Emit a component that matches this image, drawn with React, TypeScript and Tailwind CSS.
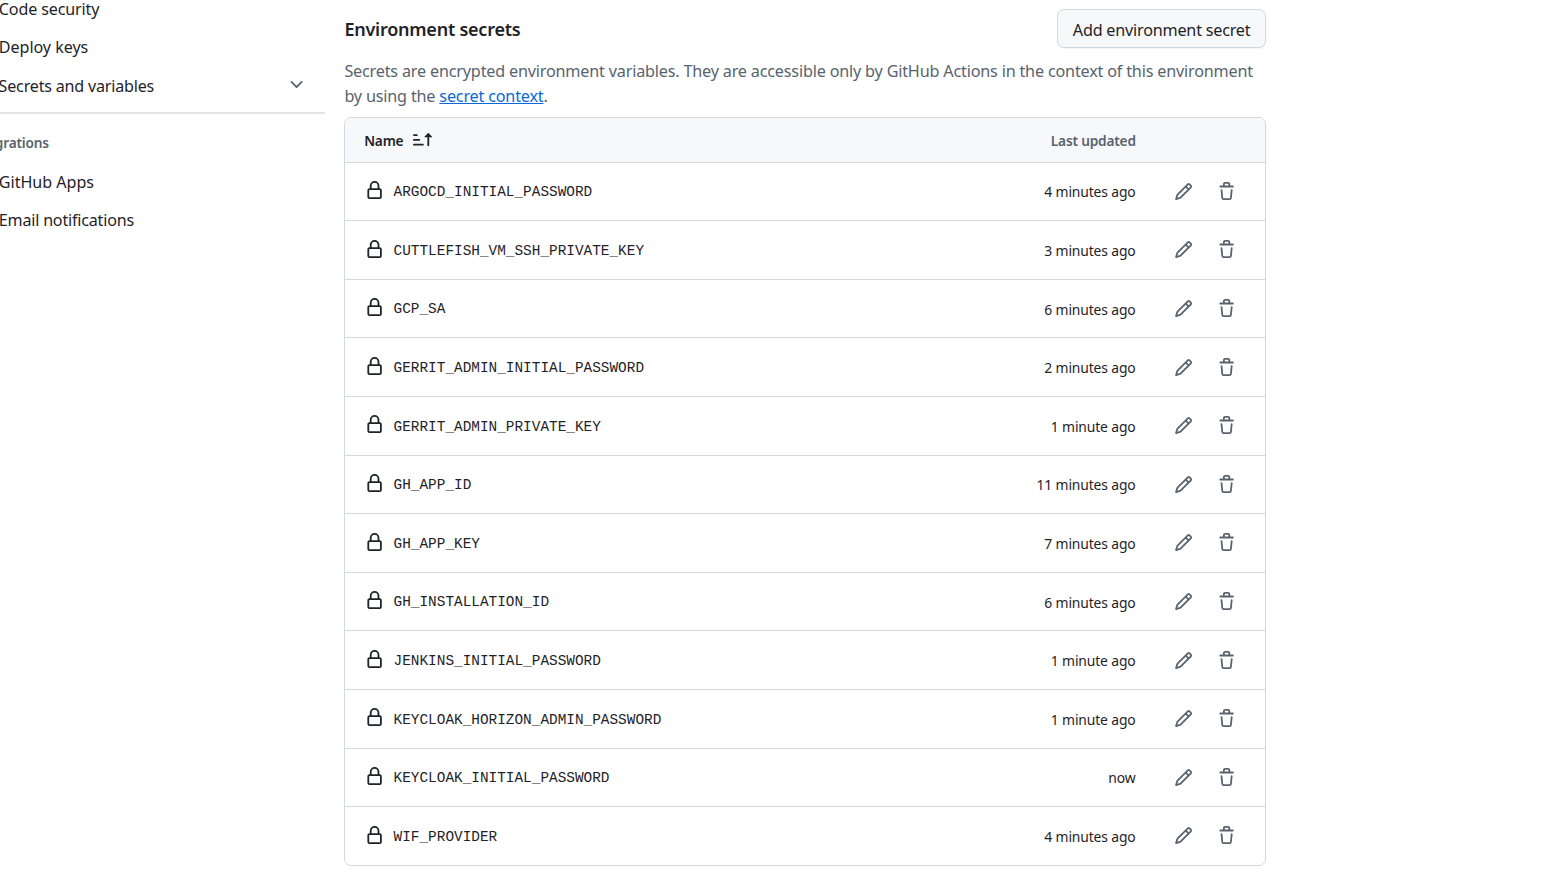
import React from "react";

const LOCK =
  "M4 4a4 4 0 0 1 8 0v2h.25c.966 0 1.75.784 1.75 1.75v5.5A1.75 1.75 0 0 1 12.25 15h-8.5A1.75 1.75 0 0 1 2 13.25v-5.5C2 6.784 2.784 6 3.75 6H4Zm8.25 3.5h-8.5a.25.25 0 0 0-.25.25v5.5c0 .138.112.25.25.25h8.5a.25.25 0 0 0 .25-.25v-5.5a.25.25 0 0 0-.25-.25ZM10.5 6V4a2.5 2.5 0 1 0-5 0v2Z";
const PENCIL =
  "M11.013 1.427a1.75 1.75 0 0 1 2.474 0l1.086 1.086a1.75 1.75 0 0 1 0 2.474l-8.61 8.61c-.21.21-.47.364-.756.445l-3.251.93a.75.75 0 0 1-.927-.928l.929-3.25c.081-.286.235-.547.445-.758l8.61-8.61Zm.176 4.823L9.75 4.81l-6.286 6.287a.253.253 0 0 0-.064.108l-.558 1.953 1.953-.558a.253.253 0 0 0 .108-.064Zm1.238-3.763a.25.25 0 0 0-.354 0L10.811 3.75l1.439 1.44 1.263-1.263a.25.25 0 0 0 0-.354Z";
const TRASH =
  "M11 1.75V3h2.25a.75.75 0 0 1 0 1.5H2.75a.75.75 0 0 1 0-1.5H5V1.75C5 .784 5.784 0 6.75 0h2.5C10.216 0 11 .784 11 1.75ZM4.496 6.675l.66 6.6a.25.25 0 0 0 .249.225h5.19a.25.25 0 0 0 .249-.225l.66-6.6a.75.75 0 0 1 1.492.149l-.66 6.6A1.748 1.748 0 0 1 10.595 15h-5.19a1.75 1.75 0 0 1-1.741-1.575l-.66-6.6a.75.75 0 1 1 1.492-.15ZM6.5 1.75V3h3V1.75a.25.25 0 0 0-.25-.25h-2.5a.25.25 0 0 0-.25.25Z";
const CHEVRON =
  "M12.78 5.22a.749.749 0 0 1 0 1.06l-4.25 4.25a.749.749 0 0 1-1.06 0L3.22 6.28a.749.749 0 1 1 1.06-1.06L8 8.939l3.72-3.719a.749.749 0 0 1 1.06 0Z";
const SORT =
  "m12.927 2.573 3 3A.25.25 0 0 1 15.75 6H13.5v6.75a.75.75 0 0 1-1.5 0V6H9.75a.25.25 0 0 1-.177-.427l3-3a.25.25 0 0 1 .354 0ZM0 12.25a.75.75 0 0 1 .75-.75h7.5a.75.75 0 0 1 0 1.5H.75a.75.75 0 0 1-.75-.75Zm0-4a.75.75 0 0 1 .75-.75h4.5a.75.75 0 0 1 0 1.5H.75A.75.75 0 0 1 0 8.25Zm0-4a.75.75 0 0 1 .75-.75h2.5a.75.75 0 0 1 0 1.5H.75A.75.75 0 0 1 0 4.25Z";

function Icon({ d, className = "" }: { d: string; className?: string }) {
  return (
    <svg viewBox="0 0 16 16" fill="currentColor" className={`size-[19.2px] shrink-0 ${className}`} aria-hidden="true">
      <path d={d} />
    </svg>
  );
}

const SECRETS: [string, string][] = [
  ["ARGOCD_INITIAL_PASSWORD", "4 minutes ago"],
  ["CUTTLEFISH_VM_SSH_PRIVATE_KEY", "3 minutes ago"],
  ["GCP_SA", "6 minutes ago"],
  ["GERRIT_ADMIN_INITIAL_PASSWORD", "2 minutes ago"],
  ["GERRIT_ADMIN_PRIVATE_KEY", "1 minute ago"],
  ["GH_APP_ID", "11 minutes ago"],
  ["GH_APP_KEY", "7 minutes ago"],
  ["GH_INSTALLATION_ID", "6 minutes ago"],
  ["JENKINS_INITIAL_PASSWORD", "1 minute ago"],
  ["KEYCLOAK_HORIZON_ADMIN_PASSWORD", "1 minute ago"],
  ["KEYCLOAK_INITIAL_PASSWORD", "now"],
  ["WIF_PROVIDER", "4 minutes ago"],
];

function Sidebar() {
  return (
    <nav className="flex w-[325px] shrink-0 flex-col text-[16.1px] leading-[24px] tracking-[-0.2px]">
      <a className="-mt-[3px] -ml-[1.2px] h-[38px] tracking-[-0.14px]">Code security</a>
      <a className="-ml-[1.2px] h-[39px] tracking-[-0.05px]">Deploy keys</a>
      <div className="-ml-[1.4px] flex h-[38px] justify-between pr-[19px]">
        <span>Secrets and variables</span>
        <Icon d={CHEVRON} className="mt-[1px] text-[#59636e]" />
      </div>
      <div className="h-[2px] bg-[#dfe4e8]" />
      <div className="-ml-[31.7px] mt-[17px] h-[39px] text-[13.7px] font-semibold text-[#59636e]">Integrations</div>
      <a className="-ml-[1.2px] h-[38px] tracking-[-0.02px]">GitHub Apps</a>
      <a className="-ml-[1.2px]">Email notifications</a>
    </nav>
  );
}

export default function App() {
  return (
    <div className="flex h-[873px] w-[1566px] overflow-hidden bg-white font-['Noto_Sans',sans-serif] text-[#1f2328]">
      <Sidebar />
      <main className="ml-[19px] w-[922px] shrink-0">
        <div className="flex h-[59px] items-start justify-between pt-[9px]">
          <h2 className="mt-[6px] ml-[0.4px] text-[18px] leading-[29px] font-semibold tracking-[-0.23px]">Environment secrets</h2>
          <button className="h-[39px] rounded-[7px] border border-[#d1d9e0] bg-[#f6f8fa] px-[14.6px] pt-[3px] text-[16.2px] tracking-[-0.22px] shadow-[0_1px_0_rgba(31,35,40,0.04)]">
            Add environment secret
          </button>
        </div>
        <p className="ml-[0.4px] h-[58px] text-[16.2px] leading-[25.2px] tracking-[-0.19px] whitespace-nowrap text-[#59636e]">
          Secrets are encrypted environment variables. They are accessible only by GitHub Actions in the context of this environment
          <br />
          by using the <a className="text-[#0969da] underline">secret context</a>.
        </p>
        <div className="flex h-[749px] flex-col overflow-hidden rounded-[7px] border border-[#d1d9e0]">
          <div className="flex h-[43.6px] shrink-0 items-center bg-[#f6f8fa] px-[19.2px] text-[13.7px] font-semibold tracking-[-0.2px]">
            <span className="mt-[2.4px]">Name</span>
            <Icon d={SORT} className="ml-[10px]" />
            <span className="mt-[2.4px] ml-auto mr-[110px] text-[#59636e]">Last updated</span>
          </div>
          {SECRETS.map(([name, time]) => (
            <div key={name} className="flex h-[58.6px] shrink-0 items-center border-t border-[#d1d9e0] pl-[20px] pr-[28.8px]">
              <Icon d={LOCK} className="mb-[1.6px]" />
              <span className="mt-[1.8px] ml-[9.4px] font-['Liberation_Mono',monospace] text-[14.4px] leading-[20px]">{name}</span>
              <span className="mt-[2.8px] ml-auto mr-[38.3px] text-[13.9px] tracking-[-0.15px]">{time}</span>
              <Icon d={PENCIL} className="mr-[24px] text-[#59636e]" />
              <Icon d={TRASH} className="text-[#59636e]" />
            </div>
          ))}
        </div>
      </main>
    </div>
  );
}
